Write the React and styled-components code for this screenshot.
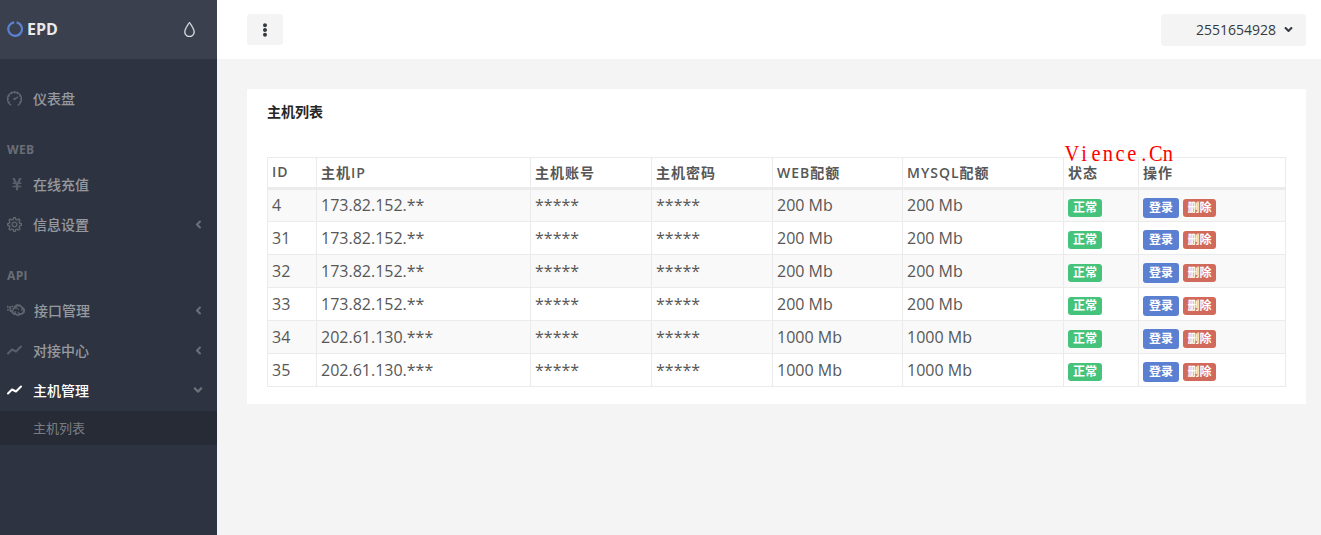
import React from "react";
import styled, { createGlobalStyle } from "styled-components";
import { FaYenSign, FaEllipsisV, FaAngleLeft, FaAngleDown, FaCloudversify } from "react-icons/fa";
import { SlSpeedometer, SlSettings, SlDrop } from "react-icons/sl";

const FONT = `"Open Sans", "Noto Sans CJK SC", sans-serif`;

const hosts = [
  { id: 4, ip: "173.82.152.**", web: "200 Mb", mysql: "200 Mb" },
  { id: 31, ip: "173.82.152.**", web: "200 Mb", mysql: "200 Mb" },
  { id: 32, ip: "173.82.152.**", web: "200 Mb", mysql: "200 Mb" },
  { id: 33, ip: "173.82.152.**", web: "200 Mb", mysql: "200 Mb" },
  { id: 34, ip: "202.61.130.***", web: "1000 Mb", mysql: "1000 Mb" },
  { id: 35, ip: "202.61.130.***", web: "1000 Mb", mysql: "1000 Mb" },
];

const TrendIcon = () => (
  <svg width="15" height="10" viewBox="0 0 15 10" fill="none" stroke="currentColor" strokeWidth="2" strokeLinecap="round" strokeLinejoin="round">
    <path d="M1 8.5 L5 4.5 L9 6.5 L14 1.5" />
  </svg>
);

const RingIcon = () => (
  <svg width="16" height="16" viewBox="0 0 16 16" fill="none" stroke="#5c80d1" strokeWidth="2.2">
    <path d="M9.6 1.4 A6.8 6.8 0 1 1 7.2 1.3" />
  </svg>
);

const App = () => {
  return (
    <Page>
      <GlobalStyle />
      <Sidebar>
        <Brand>
          <Logo>
            <RingIcon />
            EPD
          </Logo>
          <DropIcon><SlDrop size={15} /></DropIcon>
        </Brand>
        <Nav>
          <NavItem>
            <NavIcon $thick={30}><SlSpeedometer size={15} /></NavIcon>
            <NavLabel>仪表盘</NavLabel>
          </NavItem>
          <NavHeading>WEB</NavHeading>
          <NavItem>
            <NavIcon $indent={3}><FaYenSign size={14} /></NavIcon>
            <NavLabel>在线充值</NavLabel>
          </NavItem>
          <NavItem>
            <NavIcon $thick={30}><SlSettings size={15} /></NavIcon>
            <NavLabel>信息设置</NavLabel>
            <Caret><FaAngleLeft size={13} /></Caret>
          </NavItem>
          <NavHeading>API</NavHeading>
          <NavItem>
            <NavIcon $thick={16} $wide><FaCloudversify size={18} /></NavIcon>
            <NavLabel>接口管理</NavLabel>
            <Caret><FaAngleLeft size={13} /></Caret>
          </NavItem>
          <NavItem>
            <NavIcon><TrendIcon /></NavIcon>
            <NavLabel>对接中心</NavLabel>
            <Caret><FaAngleLeft size={13} /></Caret>
          </NavItem>
          <NavItem $active>
            <NavIcon $active><TrendIcon /></NavIcon>
            <NavLabel>主机管理</NavLabel>
            <Caret><FaAngleDown size={14} /></Caret>
          </NavItem>
          <SubMenu>
            <SubItem>主机列表</SubItem>
          </SubMenu>
        </Nav>
      </Sidebar>
      <Main>
        <Header>
          <MenuButton><FaEllipsisV size={14} /></MenuButton>
          <UserButton>
            2551654928
            <FaAngleDown size={13} />
          </UserButton>
        </Header>
        <Content>
          <Block>
            <BlockTitle>主机列表</BlockTitle>
            <TableWrap>
              <Watermark>
                {"Vience.Cn".split("").map((c, i) => (
                  <WatermarkChar key={i}>{c}</WatermarkChar>
                ))}
              </Watermark>
              <Table>
                <colgroup>
                  <col style={{ width: 49 }} />
                  <col style={{ width: 214 }} />
                  <col style={{ width: 121 }} />
                  <col style={{ width: 121 }} />
                  <col style={{ width: 130 }} />
                  <col style={{ width: 161 }} />
                  <col style={{ width: 75 }} />
                  <col />
                </colgroup>
                <thead>
                  <tr>
                    <Th>ID</Th>
                    <Th>主机IP</Th>
                    <Th>主机账号</Th>
                    <Th>主机密码</Th>
                    <Th>WEB配额</Th>
                    <Th>MYSQL配额</Th>
                    <Th>状态</Th>
                    <Th>操作</Th>
                  </tr>
                </thead>
                <tbody>
                  {hosts.map((h) => (
                    <Row key={h.id}>
                      <Td>{h.id}</Td>
                      <Td>{h.ip}</Td>
                      <Td>*****</Td>
                      <Td>*****</Td>
                      <Td>{h.web}</Td>
                      <Td>{h.mysql}</Td>
                      <BadgeCell>
                        <Actions>
                          <Badge $color="#46c37b" $width={34}>正常</Badge>
                        </Actions>
                      </BadgeCell>
                      <BadgeCell>
                        <Actions>
                          <ActionButton $color="#5c80d1" $width={36}>登录</ActionButton>
                          <Badge $color="#d26a5c" $width={33}>删除</Badge>
                        </Actions>
                      </BadgeCell>
                    </Row>
                  ))}
                </tbody>
              </Table>
            </TableWrap>
          </Block>
        </Content>
      </Main>
    </Page>
  );
};

const GlobalStyle = createGlobalStyle`
  html, body {
    margin: 0;
    padding: 0;
    height: 100%;
    background: #f4f4f4;
  }
  body {
    font-family: ${FONT};
    font-size: 16px;
    color: #575757;
  }
`;

const Page = styled.div`
  display: flex;
  height: 535px;
  overflow: hidden;
`;

const Sidebar = styled.aside`
  width: 217px;
  flex-shrink: 0;
  background: #2d3340;
`;

const Brand = styled.div`
  height: 59px;
  background: #3a404d;
  display: flex;
  align-items: center;
  justify-content: space-between;
  padding: 0 20px 0 7px;
  box-sizing: border-box;
`;

const Logo = styled.div`
  display: flex;
  align-items: center;
  gap: 4px;
  color: #e8e9eb;
  font-weight: 700;
  font-size: 16px;
  padding-bottom: 2px;
`;

const DropIcon = styled.span`
  display: flex;
  color: #e4e6e9;
  svg { stroke: currentColor; stroke-width: 20; }
`;

const Nav = styled.nav`
  padding-top: 20px;
`;

const NavItem = styled.div`
  height: 40px;
  box-sizing: border-box;
  padding: 0 12px 2px 7px;
  display: flex;
  align-items: center;
  font-size: 14px;
  color: ${(p) => (p.$active ? "#ffffff" : "rgba(255, 255, 255, 0.5)")};
`;

const NavIcon = styled.span`
  width: ${(p) => 26 - (p.$indent || 0)}px;
  margin-left: ${(p) => p.$indent || 0}px;
  display: flex;
  align-items: center;
  color: ${(p) => (p.$active ? "#ffffff" : "rgba(255, 255, 255, 0.22)")};
  ${(p) => p.$wide && "margin-right: 1px;"}
  ${(p) => p.$thick && `svg { stroke: currentColor; stroke-width: ${p.$thick}; }`}
`;

const NavLabel = styled.span`
  flex: 1;
  font-weight: 500;
`;

const Caret = styled.span`
  display: flex;
  align-items: center;
  color: rgba(255, 255, 255, 0.3);
`;

const NavHeading = styled.div`
  height: 46px;
  box-sizing: border-box;
  padding: 24px 0 0 7px;
  font-size: 12px;
  line-height: 14px;
  font-weight: 700;
  letter-spacing: 0.4px;
  color: rgba(255, 255, 255, 0.3);
`;

const SubMenu = styled.div`
  background: #262b36;
  height: 34px;
  padding-bottom: 2px;
  box-sizing: border-box;
  display: flex;
  align-items: center;
`;

const SubItem = styled.div`
  padding-left: 33px;
  font-size: 13px;
  color: rgba(255, 255, 255, 0.4);
`;

const Main = styled.main`
  flex: 1;
  min-width: 0;
`;

const Header = styled.header`
  height: 59px;
  background: #ffffff;
  display: flex;
  align-items: center;
  justify-content: space-between;
  padding: 0 15px 0 30px;
`;

const MenuButton = styled.div`
  width: 36px;
  height: 31px;
  background: #f4f4f4;
  border-radius: 3px;
  display: flex;
  align-items: center;
  justify-content: center;
  color: #343a40;
`;

const UserButton = styled.div`
  width: 145px;
  height: 32px;
  box-sizing: border-box;
  background: #f4f4f4;
  border-radius: 3px;
  display: flex;
  align-items: center;
  justify-content: flex-end;
  gap: 6px;
  padding-right: 11px;
  font-size: 14px;
  color: #343a40;
`;

const Content = styled.div`
  padding: 30px 15px 0 30px;
`;

const Block = styled.section`
  background: #ffffff;
  padding: 13px 20px 17px;
  height: 315px;
  box-sizing: border-box;
`;

const BlockTitle = styled.h3`
  margin: 0;
  font-size: 14px;
  line-height: 20px;
  font-weight: 600;
  color: #262626;
`;

const TableWrap = styled.div`
  position: relative;
  margin-top: 35px;
`;

const Watermark = styled.div`
  position: absolute;
  left: 799px;
  top: -13px;
  display: flex;
  font-family: "Liberation Serif", serif;
  font-size: 24px;
  line-height: 19px;
  color: #ff0000;
  transform: scaleX(0.85);
  transform-origin: left;
`;

const WatermarkChar = styled.span`
  width: 14.1px;
  display: flex;
  justify-content: center;
`;

const Table = styled.table`
  width: 1019px;
  table-layout: fixed;
  border-collapse: collapse;
  background: #ffffff;
`;

const Th = styled.th`
  height: 31px;
  box-sizing: border-box;
  padding: 0 4px 2px;
  text-align: left;
  border: 1px solid #ebebeb;
  border-bottom: 3px solid #ebebeb;
  font-size: 14px;
  font-weight: 600;
  letter-spacing: 1px;
  color: #575757;
`;

const Td = styled.td`
  height: 33px;
  box-sizing: border-box;
  padding: 0 4px;
  border: 1px solid #ebebeb;
  font-size: 16px;
  color: #575757;
  white-space: nowrap;
`;

const Row = styled.tr`
  &:nth-child(odd) { background: #f9f9f9; }
  &:first-child td { padding-bottom: 2px; }
  &:first-child td:nth-child(n + 7) { padding-bottom: 0; }
`;

const BadgeCell = styled(Td)`
  padding-top: 4px;
`;

const Badge = styled.span`
  display: inline-block;
  width: ${(p) => p.$width}px;
  height: 18px;
  line-height: 18px;
  text-align: center;
  box-sizing: border-box;
  border-radius: 3px;
  background: ${(p) => p.$color};
  color: #ffffff;
  font-size: 12px;
  font-weight: 700;
`;

const ActionButton = styled(Badge)`
  height: 20px;
  line-height: 20px;
`;

const Actions = styled.div`
  display: flex;
  align-items: center;
  gap: 4px;
`;

export default App;
